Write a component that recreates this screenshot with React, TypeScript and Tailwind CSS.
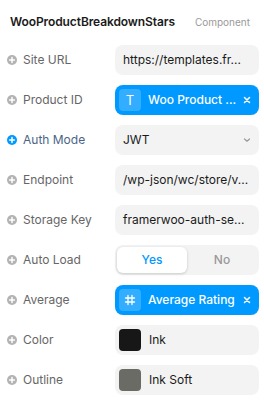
import React from "react";

function PlusIcon({ blue }: { blue?: boolean }) {
  return (
    <svg width="10" height="10" viewBox="0 0 10 10" className="shrink-0">
      <circle cx="5" cy="5" r="5" fill={blue ? "#0099ff" : "#b3b3b3"} />
      <path d="M5 2.6v4.8M2.6 5h4.8" stroke="#fff" strokeWidth="1.5" strokeLinecap="round" />
    </svg>
  );
}

function Row({ label, blue, children }: { label: string; blue?: boolean; children: React.ReactNode }) {
  return (
    <div className="flex items-center h-[30px]">
      <div className="flex items-center gap-[6px] w-[115px] pl-[7px]">
        <PlusIcon blue={blue} />
        <span className={`text-[12px] ${blue ? "text-[#4a6585]" : "text-[#666666]"}`}>{label}</span>
      </div>
      <div className="w-[144px] h-[30px]">{children}</div>
    </div>
  );
}

function TextBox({ value }: { value: string }) {
  return (
    <div className="h-full rounded-[8px] bg-[#f3f3f3] flex items-center px-[8px] text-[12px] text-[#1a1a1a] whitespace-nowrap overflow-hidden">
      {value}
    </div>
  );
}

function Chip({ icon, value }: { icon: React.ReactNode; value: string }) {
  return (
    <div className="h-full rounded-[8px] bg-[#0099ff] flex items-center pl-[4px] pr-[8px] text-white">
      <div className="w-[22px] h-[22px] rounded-[4px] bg-[#ffffff33] flex items-center justify-center shrink-0">{icon}</div>
      <span className="ml-[7px] text-[12px] font-medium flex-1 whitespace-nowrap overflow-hidden">{value}</span>
      <svg width="8" height="8" viewBox="0 0 8 8" className="shrink-0">
        <path d="M1.5 1.5l5 5M6.5 1.5l-5 5" stroke="#fff" strokeWidth="1.5" strokeLinecap="round" />
      </svg>
    </div>
  );
}

function Swatch({ color, name }: { color: string; name: string }) {
  return (
    <div className="h-full rounded-[8px] bg-[#f3f3f3] flex items-center pl-[4px] text-[12px] text-[#1a1a1a]">
      <div className="w-[22px] h-[22px] rounded-[4px] shrink-0" style={{ background: color }} />
      <span className="ml-[8px]">{name}</span>
    </div>
  );
}

export default function App() {
  return (
    <div className="w-[264px] h-[402px] bg-white" style={{ fontFamily: "Inter, 'Noto Sans', sans-serif" }}>
      <div className="flex items-center justify-between h-[45px] pl-[10px] pr-[14px] pb-[2px]">
        <span className="text-[12px] font-semibold text-[#1a1a1a] tracking-[-0.1px]">WooProductBreakdownStars</span>
        <span className="text-[10px] text-[#999999] mt-[2px]">Component</span>
      </div>
      <div className="flex flex-col gap-[10px]">
        <Row label="Site URL"><TextBox value="https://templates.fr..." /></Row>
        <Row label="Product ID">
          <Chip icon={<span className="text-[13px] font-normal leading-none">T</span>} value="Woo Product ..." />
        </Row>
        <Row label="Auth Mode" blue>
          <div className="h-full rounded-[8px] bg-[#f3f3f3] flex items-center justify-between px-[8px] text-[12px] text-[#1a1a1a]">
            <span>JWT</span>
            <svg width="8" height="6" viewBox="0 0 8 6">
              <path d="M1.5 2l2.5 2.2L6.5 2" stroke="#999" strokeWidth="1.2" fill="none" strokeLinecap="round" strokeLinejoin="round" />
            </svg>
          </div>
        </Row>
        <Row label="Endpoint"><TextBox value="/wp-json/wc/store/v..." /></Row>
        <Row label="Storage Key"><TextBox value="framerwoo-auth-se..." /></Row>
        <Row label="Auto Load">
          <div className="h-full rounded-[8px] bg-[#f3f3f3] flex items-center p-[2px] text-[12px] font-medium">
            <div className="flex-1 h-full rounded-[6px] bg-white shadow-[0_1px_3px_rgba(0,0,0,0.18)] flex items-center justify-center text-[#0099ff]">Yes</div>
            <div className="flex-1 h-full flex items-center justify-center text-[#999999]">No</div>
          </div>
        </Row>
        <Row label="Average">
          <Chip
            icon={
              <svg width="12" height="12" viewBox="0 0 12 12">
                <path d="M4 1.5v9M8 1.5v9M1.5 4h9M1.5 8h9" stroke="#fff" strokeWidth="1.3" strokeLinecap="round" />
              </svg>
            }
            value="Average Rating"
          />
        </Row>
        <Row label="Color"><Swatch color="#171717" name="Ink" /></Row>
        <Row label="Outline"><Swatch color="#6b6b66" name="Ink Soft" /></Row>
      </div>
    </div>
  );
}
